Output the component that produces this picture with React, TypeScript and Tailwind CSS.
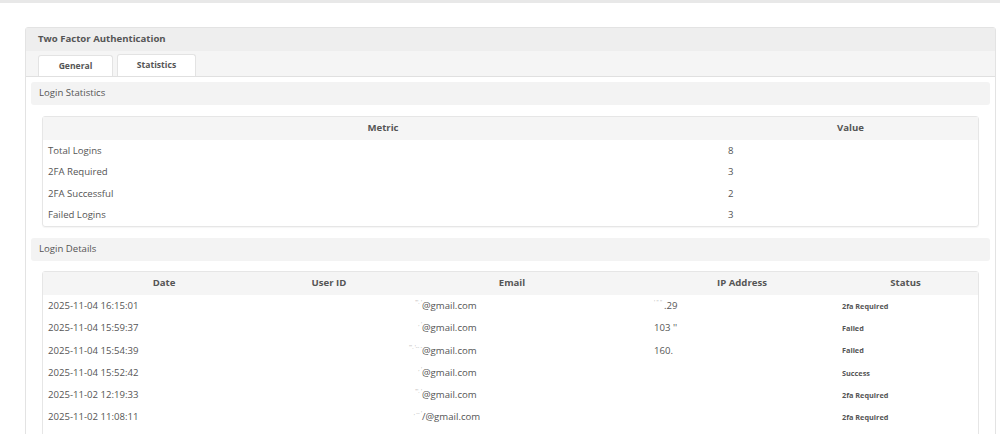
import React from 'react';

const stats = [
  { metric: 'Total Logins', value: '8' },
  { metric: '2FA Required', value: '3' },
  { metric: '2FA Successful', value: '2' },
  { metric: 'Failed Logins', value: '3' },
];

const logins = [
  { date: '2025-11-04 16:15:01', email: '@gmail.com', pre: '"\'.  \'', ip: '.29', ipPre: '\'      \'\' \'\'', status: '2fa Required' },
  { date: '2025-11-04 15:59:37', email: '@gmail.com', pre: ',   \'', ip: '103 \'\'', ipPre: '', status: 'Failed' },
  { date: '2025-11-04 15:54:39', email: '@gmail.com', pre: '\'\'\'. \'-- -', ip: '160.', ipPre: '', status: 'Failed' },
  { date: '2025-11-04 15:52:42', email: '@gmail.com', pre: ',  \'', ip: '', ipPre: '', status: 'Success' },
  { date: '2025-11-02 12:19:33', email: '@gmail.com', pre: '"\'.  \'', ip: '', ipPre: '', status: '2fa Required' },
  { date: '2025-11-02 11:08:11', email: '/@gmail.com', pre: ',   -- \'', ip: '', ipPre: '', status: '2fa Required' },
];

export default function App() {
  return (
    <div className="h-[434px] overflow-hidden bg-white text-[#555] text-[9.6px]" style={{ fontFamily: '"Open Sans", "Noto Sans", sans-serif' }}>
      <div className="h-[3px] bg-[#e8e8e8]" />
      <div className="pl-[25px] pr-[4px] pt-[24px]">
        <div className="border border-[#e3e3e3] rounded-t-[3px] bg-white">
          {/* Panel header */}
          <div className="h-[23px] bg-[#eeeeee] flex items-center px-[12px] font-bold text-[#555]">
            Two Factor Authentication
          </div>

          {/* Tabs */}
          <div className="h-[26px] bg-[#f5f5f5] border-b border-[#e0e0e0] flex items-end gap-[4px] px-[12px]">
            <div className="w-[75px] h-[21px] bg-white border border-b-0 border-[#e3e3e3] rounded-t-[3px] flex items-center justify-center font-bold text-[8.6px]">
              General
            </div>
            <div className="w-[79px] h-[22px] bg-white border border-b-0 border-[#e3e3e3] rounded-t-[3px] flex items-center justify-center font-bold text-[8.6px]">
              Statistics
            </div>
          </div>

          <div className="px-[5px] pt-[5px] pb-[2px]">
            {/* Login Statistics */}
            <div className="h-[23px] bg-[#f3f3f3] rounded-[3px] flex items-center px-[8px]">Login Statistics</div>
            <div className="px-[11px] pt-[11px] pb-[11px]">
              <table className="w-full border-separate border-spacing-0 border border-[#e6e6e6] rounded-[3px] shadow-[0_1px_1px_rgba(0,0,0,0.04)]">
                <thead>
                  <tr className="bg-[#f5f5f5] h-[23px]">
                    <th className="w-[680px] font-bold text-center">Metric</th>
                    <th className="font-bold text-center">Value</th>
                  </tr>
                </thead>
                <tbody>
                  {stats.map((s) => (
                    <tr key={s.metric} className="h-[21.5px]">
                      <td className="px-[5px]">{s.metric}</td>
                      <td className="px-[5px]">{s.value}</td>
                    </tr>
                  ))}
                </tbody>
              </table>
            </div>

            {/* Login Details */}
            <div className="h-[23px] bg-[#f3f3f3] rounded-[3px] flex items-center px-[8px]">Login Details</div>
            <div className="px-[11px] pt-[10px]">
              <table className="w-full border-separate border-spacing-0 border border-[#e6e6e6] rounded-[3px]">
                <thead>
                  <tr className="bg-[#f5f5f5] h-[23px]">
                    <th className="w-[242px] font-bold text-center">Date</th>
                    <th className="w-[88px] font-bold text-center">User ID</th>
                    <th className="w-[278px] font-bold text-center">Email</th>
                    <th className="w-[182px] font-bold text-center">IP Address</th>
                    <th className="font-bold text-center">Status</th>
                  </tr>
                </thead>
                <tbody>
                  {logins.map((l) => (
                    <tr key={l.date} className="h-[22.3px]">
                      <td className="px-[5px]">{l.date}</td>
                      <td />
                      <td className="px-[5px]">
                        <span className="inline-block w-[44px] text-right text-[5px] text-[#aaa] align-top">{l.pre}</span>
                        {l.email}
                      </td>
                      <td className="px-[3px]">
                        {l.ipPre && <span className="text-[5px] text-[#aaa] align-top pr-[2px]">{l.ipPre}</span>}
                        {l.ip}
                      </td>
                      <td className="pl-[9px] pr-[5px] font-bold text-[7.3px]">{l.status}</td>
                    </tr>
                  ))}
                  {/* next row continues below the fold */}
                  <tr className="h-[22.3px]">
                    <td colSpan={5} />
                  </tr>
                </tbody>
              </table>
            </div>
          </div>
        </div>
      </div>
    </div>
  );
}
